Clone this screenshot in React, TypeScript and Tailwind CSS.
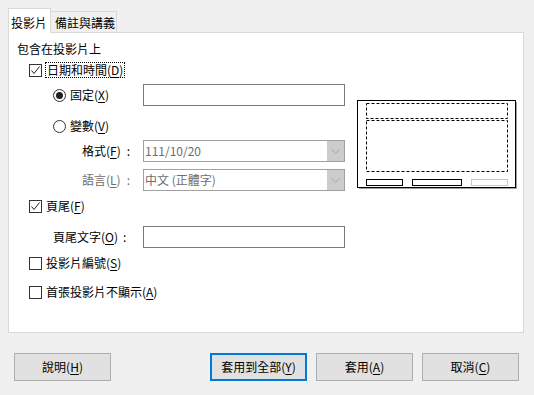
import React from "react";

function Check({ checked }: { checked?: boolean }) {
  return (
    <span className="flex h-[13px] w-[13px] shrink-0 items-center justify-center border border-[#333333] bg-white">
      {checked && (
        <svg width="11" height="11" viewBox="0 0 11 11">
          <polyline points="1.5,5.5 4,8.5 9.5,1.5" fill="none" stroke="#222" strokeWidth="1" />
        </svg>
      )}
    </span>
  );
}

function Radio({ checked }: { checked?: boolean }) {
  return (
    <span className="flex h-[13px] w-[13px] shrink-0 items-center justify-center rounded-full border border-[#333333] bg-white">
      {checked && <span className="h-[7px] w-[7px] rounded-full bg-[#222]" />}
    </span>
  );
}

function Combo({ value }: { value: string }) {
  return (
    <div className="flex h-[22px] w-[202px] items-stretch border border-[#a0a0a0] bg-white">
      <span className="flex-1 pl-[1px] leading-[20px] text-[#6d6d6d]">{value}</span>
      <span className="flex w-[17px] items-center justify-center bg-[#cccccc]">
        <svg width="9" height="5" viewBox="0 0 9 5">
          <polyline points="0.5,0.5 4.5,4.5 8.5,0.5" fill="none" stroke="#a8a8a8" strokeWidth="1" />
        </svg>
      </span>
    </div>
  );
}

function Btn({ label, k, primary }: { label: string; k: string; primary?: boolean }) {
  return (
    <button
      className={
        primary
          ? "flex h-[28px] w-[97px] items-center justify-center border-2 border-[#0078d7] bg-[#e1e1e1]"
          : "flex h-[28px] w-[97px] items-center justify-center border border-[#adadad] bg-[#e1e1e1]"
      }
    >
      {label}(<u className="underline-offset-2">{k}</u>)
    </button>
  );
}

export default function App() {
  return (
    <div className="h-[395px] w-[534px] overflow-hidden bg-[#f0f0f0] px-2 pt-2 font-['Noto_Sans_CJK_TC',sans-serif] text-[12px] leading-[16px] text-black">
      {/* tabs */}
      <div className="flex h-[24px] items-end">
        <div className="relative z-10 -mb-px h-[25px] w-[43px] border border-b-0 border-[#d9d9d9] bg-white pl-[2px] pt-[6px]">
          投影片
        </div>
        <div className="h-[21px] w-[66px] border border-l-0 border-b-0 border-[#d9d9d9] bg-[#f0f0f0] pl-[4px] pt-[3px]">
          備註與講義
        </div>
      </div>

      {/* panel */}
      <div className="flex h-[301px] w-[516px] border border-[#d9d9d9] bg-white">
        <div className="flex w-[337px] flex-col pl-[8px]">
          <div className="mt-[8px] h-[16px]">包含在投影片上</div>

          <div className="mt-[5px] flex h-[16px] items-center pl-[12px]">
            <Check checked />
            <span className="ml-[3px] border border-dotted border-black px-[1px] leading-[14px]">
              日期和時間(<u className="underline-offset-2">D</u>)
            </span>
          </div>

          <div className="mt-[6px] flex h-[22px] items-center">
            <div className="flex w-[126px] items-center pl-[36px]">
              <Radio checked />
              <span className="ml-[4px]">
                固定(<u className="underline-offset-2">X</u>)
              </span>
            </div>
            <div className="h-[22px] w-[202px] border border-[#7a7a7a] bg-white" />
          </div>

          <div className="mt-[12px] flex h-[16px] items-center pl-[36px]">
            <Radio />
            <span className="ml-[4px]">
              變數(<u className="underline-offset-2">V</u>)
            </span>
          </div>

          <div className="mt-[6px] flex h-[22px] items-center">
            <div className="w-[126px] pl-[65px]">
              格式(<u className="underline-offset-2">F</u>)<span className="ml-[6px]">:</span>
            </div>
            <Combo value="111/10/20" />
          </div>

          <div className="mt-[7px] flex h-[22px] items-center">
            <div className="w-[126px] pl-[65px] text-[#6d6d6d]">
              語言(<u className="underline-offset-2">L</u>)<span className="ml-[6px]">:</span>
            </div>
            <Combo value="中文 (正體字)" />
          </div>

          <div className="mt-[7px] flex h-[16px] items-center pl-[12px]">
            <Check checked />
            <span className="ml-[4px]">
              頁尾(<u className="underline-offset-2">F</u>)
            </span>
          </div>

          <div className="mt-[12px] flex h-[22px] items-center">
            <div className="w-[126px] pl-[36px]">
              頁尾文字(<u className="underline-offset-2">O</u>)<span className="ml-[5px]">:</span>
            </div>
            <div className="h-[22px] w-[202px] border border-[#7a7a7a] bg-white" />
          </div>

          <div className="mt-[7px] flex h-[16px] items-center pl-[12px]">
            <Check />
            <span className="ml-[4px]">
              投影片編號(<u className="underline-offset-2">S</u>)
            </span>
          </div>

          <div className="mt-[13px] flex h-[16px] items-center pl-[12px]">
            <Check />
            <span className="ml-[4px]">
              首張投影片不顯示(<u className="underline-offset-2">A</u>)
            </span>
          </div>
        </div>

        {/* layout preview */}
        <div className="ml-[11px] mt-[67px]">
          <svg width="162" height="91" viewBox="0 0 162 91">
            <line x1="159.5" y1="2" x2="159.5" y2="89" stroke="#a0a0a0" />
            <line x1="2" y1="88.5" x2="160" y2="88.5" stroke="#a0a0a0" />
            <rect x="0.5" y="0.5" width="158" height="87" fill="white" stroke="black" />
            <rect x="9.5" y="3.5" width="141" height="15" fill="none" stroke="black" strokeDasharray="3 2" />
            <rect x="9.5" y="20.5" width="141" height="51" fill="none" stroke="black" strokeDasharray="3 2" />
            <rect x="9.5" y="79.5" width="36" height="6" fill="none" stroke="black" />
            <rect x="55.5" y="79.5" width="49" height="6" fill="none" stroke="black" />
            <rect x="114.5" y="79.5" width="36" height="6" fill="none" stroke="#c8c8c8" />
          </svg>
        </div>
      </div>

      {/* buttons */}
      <div className="mt-[20px] flex items-center pl-[6px]">
        <Btn label="說明" k="H" />
        <div className="ml-auto mr-[7px] flex gap-[9px]">
          <Btn label="套用到全部" k="Y" primary />
          <Btn label="套用" k="A" />
          <Btn label="取消" k="C" />
        </div>
      </div>
    </div>
  );
}
